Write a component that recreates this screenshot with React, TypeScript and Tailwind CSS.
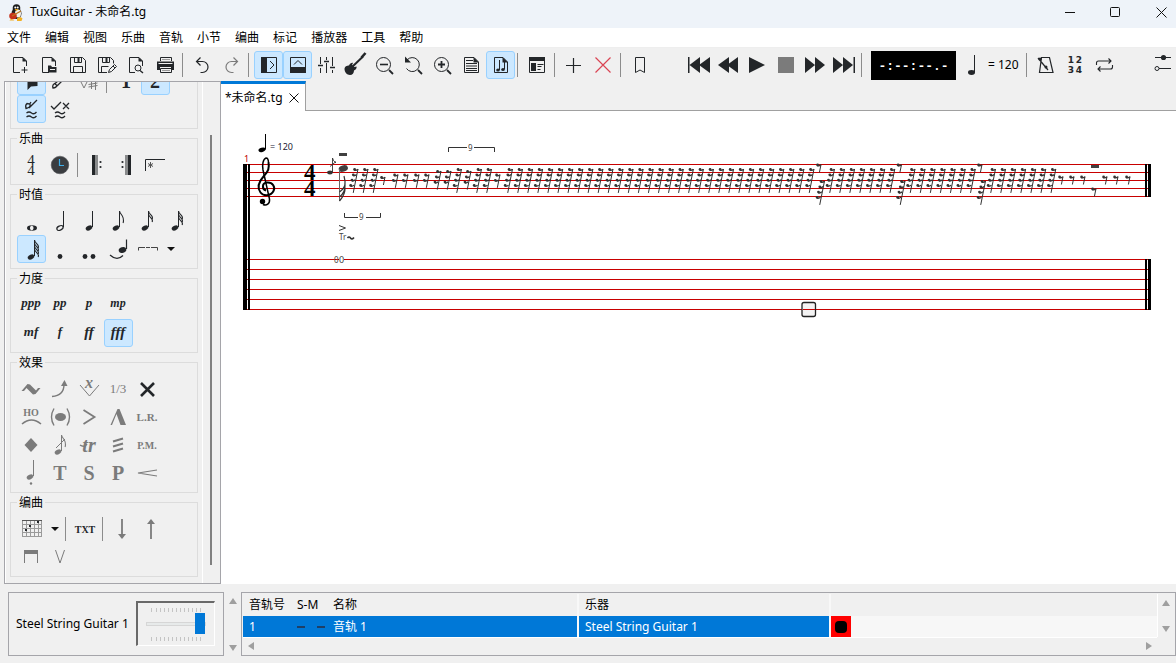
import { useState, type ReactNode } from "react";

type ToolProps = {
  label: string;
  active?: boolean;
  muted?: boolean;
  children: ReactNode;
};

const menus = ["文件", "编辑", "视图", "乐曲", "音轨", "小节", "编曲", "标记", "播放器", "工具", "帮助"];

// Every icon is drawn on the same 29x28 grid as its button
function Tool({ label, active, muted, children }: ToolProps) {
  return (
    <button
      type="button"
      aria-label={label}
      aria-pressed={active}
      className={`relative h-7 w-[29px] shrink-0 ${muted ? "text-[#7b7b7b]" : "text-[#232629]"}`}
    >
      {active && <span className="absolute inset-0 rounded-[3px] border border-[#99d1ff] bg-[#cce8ff]" />}
      <svg viewBox="0 0 29 28" className="relative block h-7 w-[29px]" fill="none" stroke="currentColor">
        {children}
      </svg>
    </button>
  );
}

function Sep() {
  return <div className="mr-[5px] ml-0.5 h-6 w-px shrink-0 self-center bg-[#8c8c8c]" />;
}

function DropArrow({ label }: { label: string }) {
  return (
    <button type="button" aria-label={label} className="flex h-7 w-[17px] shrink-0 items-center justify-center">
      <svg viewBox="0 0 8 4" className="h-1 w-2" fill="#111">
        <path d="M0 0h8L4 4z" />
      </svg>
    </button>
  );
}

type GlyphProps = {
  children: string;
  size?: number;
  x?: number;
  y?: number;
  italic?: boolean;
  weight?: string;
};

function Glyph({ children, size = 13, x = 14, y = 18, italic = false, weight = "bold" }: GlyphProps) {
  return (
    <text
      x={x}
      y={y}
      textAnchor="middle"
      fontSize={size}
      fontStyle={italic ? "italic" : "normal"}
      fontWeight={weight}
      fontFamily='"Liberation Serif", serif'
      fill="currentColor"
      stroke="none"
    >
      {children}
    </text>
  );
}

// Note with a stem; flags are counted from the top of the stem
function Note({ x = 14, y = 21, flags = 0, hollow = false }: { x?: number; y?: number; flags?: number; hollow?: boolean }) {
  return (
    <g>
      <ellipse
        cx={x}
        cy={y}
        rx="3.3"
        ry="2.1"
        transform={`rotate(-25 ${x} ${y})`}
        fill={hollow ? "none" : "currentColor"}
        strokeWidth={hollow ? 1.2 : 0.4}
      />
      <path d={`M${x + 3.5} ${y - 1}V${y - 17}`} strokeWidth="1" />
      {Array.from({ length: flags }, (_, i) => (
        <path key={i} d={`M${x + 3.5} ${y - 17 + i * 3}c.6 4 5.6 4.500 3.600 ${flags === 1 ? 12 : 8}`} strokeWidth="1.1" />
      ))}
    </g>
  );
}

function Page() {
  return (
    <>
      <path d="M14 21.500H7.500V6.500H17L20.500 10V15" />
      <path d="M16.500 6l4.500 4.500h-4.500z" fill="currentColor" stroke="none" />
    </>
  );
}

function Group({ title, children }: { title?: string; children: ReactNode }) {
  return (
    <fieldset className="shrink-0 border border-[#dcdcdc] px-1.5 py-[5px]">
      {title && <legend className="h-4 px-0.5 leading-[18px]">{title}</legend>}
      {children}
    </fieldset>
  );
}

function Row({ children }: { children: ReactNode }) {
  return <div className="flex h-7">{children}</div>;
}

function TitleBar() {
  return (
    <header className="flex h-7 shrink-0 items-center bg-[#eef3f9] pb-1 pl-2">
      <svg viewBox="0 0 16 17" className="h-[17px] w-4">
        <ellipse cx="8.500" cy="9.500" rx="5" ry="5.500" fill="#26221f" />
        <circle cx="8.500" cy="4" r="3.800" fill="#1c1c1c" />
        <ellipse cx="10" cy="9.500" rx="3" ry="4" fill="#f4f1ea" />
        <circle cx="7.300" cy="3.600" r="1" fill="#fff" />
        <circle cx="9.700" cy="3.600" r="1" fill="#fff" />
        <path d="M6.500 5h4l-2 2z" fill="#f0a818" />
        <ellipse cx="5" cy="12" rx="3.800" ry="3.200" fill="#c8321c" />
        <path d="M4 12l9-5" stroke="#b8741c" strokeWidth="1.300" />
        <path d="M9 14.500q3-3 5.500 0l-1 2.500H9z" fill="#f2b022" />
        <path d="M1.500 16.500q1-3 5 0z" fill="#f2b022" />
      </svg>
      <h1 className="ml-1.5">TuxGuitar - 未命名.tg</h1>
      <div className="ml-auto flex gap-4">
        <button type="button" aria-label="最小化" className="flex h-6 w-[30px] items-center justify-center">
          <svg viewBox="0 0 11 11" className="size-[11px]" stroke="#111" fill="none"><path d="M1 5.500h10" /></svg>
        </button>
        <button type="button" aria-label="最大化" className="flex h-6 w-[30px] items-center justify-center">
          <svg viewBox="0 0 11 11" className="size-[11px]" stroke="#111" fill="none"><rect x=".5" y=".5" width="9" height="9" rx="1" /></svg>
        </button>
        <button type="button" aria-label="关闭" className="flex h-6 w-[30px] items-center justify-center">
          <svg viewBox="0 0 11 11" className="size-[11px]" stroke="#111" fill="none"><path d="M.5.500l10 10M10.500.500l-10 10" /></svg>
        </button>
      </div>
    </header>
  );
}

function Toolbar() {
  return (
    <div className="flex h-[33px] shrink-0 items-center pt-px pl-1.5">
      <Tool label="新建">
        <Page />
        <path d="M18.500 16v6M15.500 19h6" />
      </Tool>
      <Tool label="打开">
        <Page />
        <path d="M13 21.500v-7h3l1 1.500h4.500v5.500z" fill="currentColor" stroke="none" />
        <path d="M15 18.500h5" stroke="#f0f0f0" />
      </Tool>
      <Tool label="保存">
        <path d="M6.500 6.500h12l3 3v12h-15zM10.500 6.500v5h7v-5M9.500 21.500v-6h9v6" />
        <path d="M14.500 7v4" strokeWidth="2" />
      </Tool>
      <Tool label="另存为">
        <path d="M14 21.500H5.500v-15h12l3 3v3M9.500 6.500v5h7v-5M8.500 21.500v-6h7" />
        <path d="M13.500 7v4" strokeWidth="2" />
        <path d="M15.500 21.500l1-3 5-5 2 2-5 5zM20 15l2 2" />
      </Tool>
      <Tool label="打印预览">
        <path d="M13 21.500H7.500v-15H17l3.500 3.500v5" />
        <path d="M16.500 6l4.500 4.500h-4.500z" fill="currentColor" stroke="none" />
        <circle cx="16" cy="17" r="3" />
        <path d="M18 19.500l3 2.500" strokeWidth="1.400" />
      </Tool>
      <Tool label="打印">
        <path d="M9.500 10V6.500h11V10M9.500 17.500v4h11v-4z" />
        <path d="M6 19v-8.500h17V19h-3v-3H9v3z" fill="currentColor" stroke="none" />
        <path d="M7.500 12.500h14" stroke="#f0f0f0" />
        <path d="M11 8.500h8M11 19.500h8" stroke="#999" />
      </Tool>
      <Sep />
      <Tool label="撤销">
        <path d="M12.500 6.500l-4 4 4 4M9 10.500h5.500a5.500 5.500 0 010 11h-2" strokeWidth="1.200" />
      </Tool>
      <Tool label="重做" muted>
        <path d="M16.500 6.500l4 4-4 4M20 10.500h-5.500a5.500 5.500 0 000 11h2" strokeWidth="1.200" />
      </Tool>
      <Sep />
      <Tool label="编辑工具栏" active>
        <path d="M7.500 6.500h15v15h-15z" />
        <path d="M7 6h6v16H7z" fill="currentColor" stroke="none" />
        <path d="M16 10l4 4-4 4" />
      </Tool>
      <Tool label="音轨表" active>
        <path d="M7.500 6.500h15v15h-15z" />
        <path d="M7 16h16v6H7z" fill="currentColor" stroke="none" />
        <path d="M11 13.500l4-4 4 4" />
      </Tool>
      <Tool label="混音器">
        <path d="M8.500 6v7M8.500 17v5M14.500 6v3M14.500 12v10M20.500 6v9M20.500 19v3" />
        <path d="M6 14.500h5M12 10.500h5M18 16.500h5" strokeWidth="1.600" />
      </Tool>
      <Tool label="指板">
        <path d="M3.500 18c0-2.500 2.500-3.500 4.500-3.500 1-2 2.500-3 4-2.500l-1 2 2.500 2 2-.5c.5 1.500-.5 3-2.500 4 0 2.500-1.500 4.500-4 4.500-3 0-5.500-3-5.500-6z" fill="currentColor" stroke="none" />
        <path d="M10 17L22 5.500" strokeWidth="2" />
        <path d="M20.500 6.500l4-4.500" strokeWidth="2.600" />
      </Tool>
      <Tool label="缩小">
        <circle cx="13.500" cy="13.500" r="7" />
        <path d="M10 13.500h8" strokeWidth="1.600" />
        <path d="M19 19l4 4" strokeWidth="1.800" />
      </Tool>
      <Tool label="重置缩放">
        <path d="M8 9a7 7 0 11-.5 8.500" />
        <path d="M6 5.500v6h6z" fill="currentColor" stroke="none" />
        <path d="M19 19l4 4" strokeWidth="1.800" />
      </Tool>
      <Tool label="放大">
        <circle cx="13.500" cy="13.500" r="7" />
        <path d="M10 13.500h7M13.500 10v7" strokeWidth="1.800" />
        <path d="M19 19l4 4" strokeWidth="1.800" />
      </Tool>
      <Tool label="页面布局">
        <path d="M7.500 6.500H17L21.500 11v10.500h-14zM9 9.500h7M9 12.500h11M9 15h11M9 17.500h11M9 19.500h11" />
        <path d="M16.500 6l5.500 5.500h-5.500z" fill="currentColor" stroke="none" />
      </Tool>
      <Tool label="连续布局" active>
        <path d="M8.500 6.500H17l4.500 4.500v10.500h-13zM13.500 9v10M18.500 11v7" />
        <path d="M16.500 6l5.500 5.500h-5.500z" fill="currentColor" stroke="none" />
        <ellipse cx="12" cy="19" rx="1.800" ry="1.500" fill="currentColor" stroke="none" />
        <ellipse cx="17" cy="18.500" rx="1.800" ry="1.500" fill="currentColor" stroke="none" />
      </Tool>
      <Sep />
      <Tool label="音轨属性">
        <path d="M6.500 6.500h15v15h-15z" />
        <path d="M6 6h16v4H6zM8 12h5v8H8z" fill="currentColor" stroke="none" />
        <path d="M14.500 13.500h6M14.500 15.500h4M14.500 18.500h3" />
      </Tool>
      <Sep />
      <Tool label="添加音轨">
        <path d="M13.500 7v15M6 14.500h15" strokeWidth="1.200" />
      </Tool>
      <Tool label="删除音轨">
        <path d="M6.500 6.500l15 15M21.500 6.500l-15 15" stroke="#da4453" strokeWidth="1.200" />
      </Tool>
      <Sep />
      <Tool label="标记列表">
        <path d="M9.500 6.500h9v15l-4.500-2.500-4.500 2.500z" />
      </Tool>

      <div className="ml-[30px] flex items-center">
        <Tool label="首小节">
          <path d="M3 6h1.500v16H3zM15 6v16L4.500 14zM25 6v16L14 14z" fill="currentColor" stroke="none" />
        </Tool>
        <Tool label="上一小节">
          <path d="M15 6v16L4 14zM24 6v16L13 14z" fill="currentColor" stroke="none" />
        </Tool>
        <Tool label="播放">
          <path d="M6 6l16 8-16 8z" fill="currentColor" stroke="none" />
        </Tool>
        <Tool label="停止">
          <path d="M6 6h16v16H6z" fill="#7b7b7b" stroke="none" />
        </Tool>
        <Tool label="下一小节">
          <path d="M4 6l10 8-10 8zM14 6l10 8-10 8z" fill="currentColor" stroke="none" />
        </Tool>
        <Tool label="末小节">
          <path d="M3 6l10 8-10 8zM13 6l10 8-10 8zM23.500 6H25v16h-1.500z" fill="currentColor" stroke="none" />
        </Tool>
        <Sep />
        <output className="ml-1 flex h-[29px] w-[85px] items-center justify-center bg-black pt-1 font-['Liberation_Mono',monospace] text-[13px] font-bold text-white">
          -:--:--.-
        </output>
        <svg viewBox="0 0 8 20" className="ml-3 h-5 w-2">
          <ellipse cx="3.500" cy="17.500" rx="3.500" ry="2.400" fill="#232629" />
          <path d="M6.500 0v17" stroke="#232629" />
        </svg>
        <span className="ml-3 w-9">= 120</span>
        <Sep />
        <Tool label="节拍器">
          <path d="M9.500 6.500h8l3.500 15H7.500zM6 7l10 12" strokeWidth="1.200" />
          <circle cx="8" cy="8" r="1.600" fill="currentColor" stroke="none" />
          <circle cx="14" cy="16" r="1.500" fill="currentColor" stroke="none" />
        </Tool>
        <Tool label="倒计时">
          <g fontFamily='"DejaVu Sans", sans-serif' fontWeight="bold" fontSize="9" fill="currentColor" stroke="none" textAnchor="middle">
            <text x="10" y="12">1</text>
            <text x="18" y="12">2</text>
            <text x="10" y="22">3</text>
            <text x="18" y="22">4</text>
          </g>
        </Tool>
        <Tool label="播放模式">
          <path d="M6.500 14v-2q0-2 2-2H21M22.500 14v2q0 2-2 2H8M18.500 7.500L21 10l-2.500 2.500M10.500 15.500L8 18l2.500 2.500" strokeWidth="1.100" />
        </Tool>
      </div>
      <div className="ml-auto">
        <Tool label="设置">
          <path d="M8 8.500h16M12 19.500h12" strokeWidth="1.200" />
          <circle cx="16.500" cy="8.500" r="2.600" fill="currentColor" stroke="none" />
          <circle cx="10" cy="19.500" r="2" />
        </Tool>
      </div>
    </div>
  );
}

function Sidebar() {
  return (
    <aside className="flex w-[217px] shrink-0 border border-[#a5a5aa] bg-[#f0f0f0]">
      {/* the panel is scrolled to its end */}
      <div className="flex flex-1 flex-col justify-end gap-px overflow-hidden border-x border-white pr-1 pb-1.5 pl-1">
        <Group>
          <Row>
            <Tool label="选择" active>
              <path d="M10.500 6v17l3.500-3.500 6.500-.5V6z" fill="currentColor" stroke="none" />
            </Tool>
            <Tool label="编辑">
              <path d="M8.500 17l8-7M7 21q-1-3 1.500-4.500l2.500 2q-1 2.500-4 2.500zM11 19l7-7" strokeWidth="1.300" />
            </Tool>
            <Tool label="自动升降号" muted>
              <path d="M6 15l3 6 5-10M16.500 14v8M20.500 14v9M13.500 17.500l9-1.500M13.500 20l9-1.500" />
            </Tool>
            <Sep />
            <Tool label="声部一">
              <Glyph size={20} y={21}>1</Glyph>
            </Tool>
            <Tool label="声部二" active>
              <Glyph size={20} y={21}>2</Glyph>
            </Tool>
          </Row>
          <Row>
            <Tool label="自由编辑" active>
              <path d="M12 13l8-8M9 13.500q-1-3.500 1-5l3 .5q1 3.500-4 4.500zM13 8.500l1-1.500" strokeWidth="1.300" />
              <path d="M9.500 18q2.500-2 5 0t5-1M9.500 22q2.500-2 5 0t5-1" strokeWidth="1.300" />
            </Tool>
            <Tool label="校验">
              <path d="M5 11l3 3 7-7M17 8l6 6M23 8l-6 6" strokeWidth="1.300" />
              <path d="M9 18q2.500-2 5 0t5-1M9 22q2.500-2 5 0t5-1" strokeWidth="1.300" />
            </Tool>
          </Row>
        </Group>

        <Group title="乐曲">
          <Row>
            <Tool label="拍号">
              <Glyph size={15} y={14} weight="normal">4</Glyph>
              <Glyph size={15} y={24} weight="normal">4</Glyph>
            </Tool>
            <Tool label="速度">
              <circle cx="14" cy="14" r="8.800" fill="#3a3d40" stroke="#55585a" strokeWidth=".6" />
              <path d="M13.500 8v6.500H18" stroke="#3daee9" strokeWidth="1.200" />
            </Tool>
            <Sep />
            <Tool label="反复开始">
              <path d="M9 4h3.500v20H9zM13.500 4h1v20h-1z" fill="currentColor" stroke="none" />
              <circle cx="17.500" cy="11" r="1.100" fill="currentColor" stroke="none" />
              <circle cx="17.500" cy="16" r="1.100" fill="currentColor" stroke="none" />
            </Tool>
            <Tool label="反复结束">
              <path d="M15.500 4H19v20h-3.500zM13.500 4h1v20h-1z" fill="currentColor" stroke="none" />
              <circle cx="10.500" cy="11" r="1.100" fill="currentColor" stroke="none" />
              <circle cx="10.500" cy="16" r="1.100" fill="currentColor" stroke="none" />
            </Tool>
            <Tool label="反复跳跃">
              <path d="M4.500 20V8.500H24" />
              <path d="M9.500 11v6M7 12.500l5 3M12 12.500l-5 3" stroke="#555" />
            </Tool>
          </Row>
        </Group>

        <Group title="时值">
          <Row>
            <Tool label="全音符">
              <path fillRule="evenodd" d="M10 21a5 2.700 0 0110 0a5 2.700 0 01-10 0zM13 20.500a1.600 2 0 003.500 1a1.600 2 0 00-3.500-1z" fill="currentColor" stroke="none" />
            </Tool>
            <Tool label="二分音符"><Note hollow /></Tool>
            <Tool label="四分音符"><Note /></Tool>
            <Tool label="八分音符"><Note x={12} flags={1} /></Tool>
            <Tool label="十六分音符"><Note x={12} flags={2} /></Tool>
            <Tool label="三十二分音符"><Note x={13} flags={3} /></Tool>
          </Row>
          <Row>
            <Tool label="六十四分音符" active><Note x={14} y={22} flags={4} /></Tool>
            <Tool label="附点">
              <circle cx="14" cy="21.500" r="2.400" fill="currentColor" stroke="none" />
            </Tool>
            <Tool label="双附点">
              <circle cx="10" cy="21.500" r="2.400" fill="currentColor" stroke="none" />
              <circle cx="18" cy="21.500" r="2.400" fill="currentColor" stroke="none" />
            </Tool>
            <Tool label="连音线">
              <ellipse cx="18.500" cy="15" rx="3.900" ry="2.800" transform="rotate(-20 18.500 15)" fill="currentColor" stroke="none" />
              <path d="M22.500 4.500V14M6 20q7 6.500 13 .5" strokeWidth="1.200" />
            </Tool>
            <Tool label="连音">
              <path d="M5.500 15.500v-3H12M13 12.500h4M18 12.500h6.500v3" stroke="#444" />
            </Tool>
            <DropArrow label="连音类型" />
          </Row>
        </Group>

        <Group title="力度">
          <Row>
            <Tool label="ppp"><Glyph italic y={16}>ppp</Glyph></Tool>
            <Tool label="pp"><Glyph italic y={16}>pp</Glyph></Tool>
            <Tool label="p"><Glyph italic y={16}>p</Glyph></Tool>
            <Tool label="mp"><Glyph italic y={16} size={12}>mp</Glyph></Tool>
          </Row>
          <Row>
            <Tool label="mf"><Glyph italic y={17}>mf</Glyph></Tool>
            <Tool label="f"><Glyph italic y={17}>f</Glyph></Tool>
            <Tool label="ff"><Glyph italic size={15}>ff</Glyph></Tool>
            <Tool label="fff" active><Glyph italic size={15}>fff</Glyph></Tool>
          </Row>
        </Group>

        <Group title="效果">
          <Row>
            <Tool label="颤音" muted>
              <path d="M4.500 16l6-7 2.500.5 6 6 2-2.500h2.500l-5 6-2.500.5-6.500-6.500-2.500 3z" fill="currentColor" stroke="none" />
            </Tool>
            <Tool label="推弦" muted>
              <path d="M6 21.500q12-1 12-12" strokeWidth="1.400" />
              <path d="M15 11l3.500-6 3 6z" fill="currentColor" stroke="none" />
            </Tool>
            <Tool label="摇把" muted>
              <path d="M5 10l9.500 11L24 10" />
              <Glyph italic size={16} y={13}>x</Glyph>
            </Tool>
            <Tool label="三分之一" muted><Glyph size={13} weight="normal">1/3</Glyph></Tool>
            <Tool label="闷音">
              <path d="M8 8l13 13M21 8L8 21" strokeWidth="2.600" />
            </Tool>
          </Row>
          <Row>
            <Tool label="击弦" muted>
              <Glyph size={10} y={13}>HO</Glyph>
              <path d="M5 21q9.500-8 19 0" strokeWidth="1.600" />
            </Tool>
            <Tool label="幽灵音" muted>
              <ellipse cx="14.500" cy="14" rx="5.500" ry="4" fill="currentColor" stroke="none" />
              <path d="M8 5.500q-5 8.500 0 17M21 5.500q5 8.500 0 17" strokeWidth="1.400" />
            </Tool>
            <Tool label="重音" muted>
              <path d="M8.500 7l11 7-11 7" strokeWidth="1.800" />
            </Tool>
            <Tool label="强重音" muted>
              <path d="M6.500 22l7-16h2l6.500 16h-5.500L12.500 11 8 22z" fill="currentColor" stroke="none" />
            </Tool>
            <Tool label="延音" muted><Glyph size={11}>L.R.</Glyph></Tool>
          </Row>
          <Row>
            <Tool label="泛音" muted>
              <path d="M14 7l6.500 7-6.500 7-6.500-7z" fill="currentColor" stroke="none" />
            </Tool>
            <Tool label="装饰音" muted>
              <Note x={12} flags={1} />
              <path d="M10 17l9-9" />
            </Tool>
            <Tool label="颤音记号" muted>
              <Glyph italic size={20} y={21}>tr</Glyph>
              <path d="M5 14q4 3 7-1" strokeWidth="1.400" />
            </Tool>
            <Tool label="震音拨弦" muted>
              <path d="M9 10.500l10-3M9 15.500l10-3M9 20.500l10-3" strokeWidth="2.200" />
            </Tool>
            <Tool label="手掌闷音" muted><Glyph size={10}>P.M.</Glyph></Tool>
          </Row>
          <Row>
            <Tool label="断奏" muted>
              <Note y={18} x={13} />
              <circle cx="14" cy="24.500" r="1.200" fill="currentColor" stroke="none" />
            </Tool>
            <Tool label="点弦" muted><Glyph size={20} y={21}>T</Glyph></Tool>
            <Tool label="击勾弦" muted><Glyph size={20} y={21}>S</Glyph></Tool>
            <Tool label="拨弦" muted><Glyph size={20} y={21}>P</Glyph></Tool>
            <Tool label="淡入" muted>
              <path d="M24 11L5 14l19 3" strokeWidth="1.200" />
            </Tool>
          </Row>
        </Group>

        <Group title="编曲">
          <Row>
            <Tool label="和弦">
              <path d="M5.500 5v17M9.500 5v17M13.500 5v17M17.500 5v17M21.500 5v17M24.500 5v17M5 9.500h20M5 13.500h20M5 17.500h20M5 21.500h20" stroke="#9a9a9a" />
              <path d="M5 5.500h20" stroke="#555" />
              <path d="M8 14h2v2H8zM12 10h2v2h-2zM20 6h2v2h-2z" fill="currentColor" stroke="none" />
            </Tool>
            <DropArrow label="和弦列表" />
            <Sep />
            <Tool label="文本"><Glyph size={10}>TXT</Glyph></Tool>
            <Sep />
            <Tool label="下扫弦" muted>
              <path d="M14 4v17" strokeWidth="1.800" />
              <path d="M10 19h8l-4 5z" fill="currentColor" stroke="none" />
            </Tool>
            <Tool label="上扫弦" muted>
              <path d="M14 7v17" strokeWidth="1.800" />
              <path d="M10 9h8l-4-5z" fill="currentColor" stroke="none" />
            </Tool>
          </Row>
          <Row>
            <Tool label="下拨" muted>
              <path d="M7.500 20V8M20.500 20V8" />
              <path d="M7 7h14v4H7z" fill="currentColor" stroke="none" />
            </Tool>
            <Tool label="上拨" muted>
              <path d="M9.500 7l4.500 13 4.500-13" />
            </Tool>
          </Row>
        </Group>
      </div>
      <div className="flex w-[17px] justify-center pr-0.5">
        <div className="mt-[53px] mb-[18px] w-0.5 bg-[#808080]" />
      </div>
    </aside>
  );
}

// Rest with one hook per level, hanging from its upper right tip
function Rest({ x, y, hooks }: { x: number; y: number; hooks: number }) {
  const drop = (hooks - 1) * 5.3 + 8;
  return (
    <g>
      <path d={`M${x} ${y}L${x - drop * 0.2} ${y + drop}`} strokeWidth="1" />
      {Array.from({ length: hooks }, (_, i) => (
        <g key={i}>
          <circle cx={x - 3.4 - i * 1.3} cy={y + 0.5 + i * 5.3} r="1.400" fill="#333" stroke="none" />
          <path d={`M${x - 3.4 - i * 1.3} ${y + 1.4 + i * 5.3}q2 .3 3.300-1.200`} strokeWidth="1.300" />
        </g>
      ))}
    </g>
  );
}

const range = (start: number, count: number) => Array.from({ length: count }, (_, i) => start + i * 10.05);

const rests: [number, number, number][] = [
  [358, 169, 4], [368, 169, 4], [378, 169, 4], [385, 177, 1],
  [398, 174.5, 2], [408, 174.5, 2], [419, 174.5, 2], [429, 174.5, 2],
  [441, 171, 3], [451, 171, 3], [461.5, 169, 4], [471, 171, 3], [481.5, 169, 4], [491.5, 169, 4], [500, 174.5, 2],
  ...range(512.5, 31).map((x): [number, number, number] => [x, 169, 4]),
  ...[834.5, 915, 995.5].flatMap((s) => range(s, 7).map((x): [number, number, number] => [x, 169, 4])),
  ...[821, 901.5, 982].map((x): [number, number, number] => [x, 164.5, 1]),
  ...[824.5, 905, 985.5].map((x): [number, number, number] => [x, 181, 4]),
  [1063, 176.5, 1], [1074, 176.5, 1], [1085, 176.5, 1], [1096, 188.5, 1],
  [1107, 176.5, 1], [1118, 176.5, 1], [1130, 176.5, 1],
];

function Score() {
  return (
    <svg viewBox="221 111 955 220" width="955" height="220" fill="none" stroke="#333" fontFamily='"Noto Sans", sans-serif'>
      <path d="M247 164.500h901M247 172.500h901M247 180.500h901M247 188.500h901M247 196.500h901" stroke="#c80000" />
      <path d="M247 259.500h901M247 269.500h901M247 279.500h901M247 289.500h901M247 299.500h901M247 309.500h901" stroke="#c80000" />
      <path d="M243 164h4v146h-4zM248 164h2v146h-2zM1145 164h2v33h-2zM1148 164h3v33h-3zM1145 259h2v51h-2zM1148 259h3v51h-3z" fill="#000" stroke="none" />

      {/* tempo */}
      <ellipse cx="262" cy="149.800" rx="3.600" ry="2.200" transform="rotate(-15 262 149.800)" fill="#000" stroke="none" />
      <path d="M265.500 134v15.500" stroke="#000" />
      <text x="270" y="150" fontSize="9" fill="#223" stroke="none">= 120</text>
      <text x="244" y="162" fontSize="9" fill="#c00000" stroke="none">1</text>

      {/* clef */}
      <g stroke="#000">
        <path d="M266 190.500c-4-1-4.500-7.500 1-8 6-.5 8.500 5 6.500 8.500-2.500 5-10 5.500-13 1.500-4-5.500-1.500-11 3-16 5-5 6-8.500 5-14" strokeWidth="2" />
        <path d="M268.500 163c0-3-1-5-2.500-5-3 1-4 7-3 12l6.500 29c.5 5-3 7-6.500 5.500" strokeWidth="1.500" />
        <circle cx="262.500" cy="201.500" r="2.700" fill="#000" stroke="none" />
      </g>
      <g fontFamily='"Liberation Serif", serif' fontWeight="bold" fontSize="23" fill="#000" stroke="none">
        <text x="304" y="180">4</text>
        <text x="304" y="196">4</text>
      </g>

      {/* first beat with its grace note */}
      <ellipse cx="330" cy="172.500" rx="2.800" ry="1.900" fill="#333" stroke="none" />
      <path d="M332.500 158v14.500M332.500 158q.5 3 3.500 5M330 166.500l6-5" strokeWidth=".9" />
      <ellipse cx="343.300" cy="168.500" rx="4.700" ry="3.200" transform="rotate(-15 343.300 168.500)" fill="#404040" stroke="none" />
      <path d="M339.500 169v32" stroke="#666" />
      <path d="M339.500 201q6-7 5.500-13M339.500 197q6-5 5.500-12M339.500 192q6-4 5.500-10M345 186q.5-5-1-10" strokeWidth="1.200" />
      <path d="M339 153h8v3h-8z" fill="#404040" stroke="none" />
      <path d="M1091 165h8v3h-8z" fill="#404040" stroke="none" />

      {rests.map(([x, y, hooks], i) => (
        <Rest key={i} x={x} y={y} hooks={hooks} />
      ))}

      <path d="M448.500 152v-4.500H467M474 147.500h20.500v4.500M344.500 213v4.500H358M366 217.500h14.500V213" />
      <path d="M339 225.500l6.500 2.500-6.500 2.500" />
      <path d="M347.500 238q1.500-2 3 0t3.500-.5" strokeWidth="1.600" />
      <g fontSize="8" fill="#444" stroke="none">
        <text x="468" y="151">9</text>
        <text x="359" y="220">9</text>
        <text x="339" y="240">Tr</text>
      </g>
      <path d="M339 257h5v5h-5z" fill="#fff" stroke="none" />
      <g fill="#444" stroke="none" fontSize="9">
        <text x="334" y="263" fontSize="8">0</text>
        <text x="339" y="263">0</text>
      </g>

      <rect x="802" y="302.500" width="13.500" height="14" rx="2" fill="#f3f3f3" stroke="#222" strokeWidth="1.300" />
      <path d="M803 309.500h12" stroke="#c80000" />
    </svg>
  );
}

function ScrollArrow({ dir }: { dir: "up" | "down" | "left" | "right" }) {
  const shapes = { up: "M0 7h8L4 1z", down: "M0 1h8L4 7z", left: "M7 0v8L1 4z", right: "M1 0v8l6-4z" };
  return (
    <svg viewBox="0 0 8 8" className="size-2" fill="#9f9f9f">
      <path d={shapes[dir]} />
    </svg>
  );
}

function Ticks() {
  return (
    <svg viewBox="0 0 50 4" className="h-1 w-[50px]" stroke="#c4c4c4">
      <path d="M.5 0v4M5.500 0v4M9.500 0v4M13.500 0v4M17.500 0v4M21.500 0v4M25.500 0v4M29.500 0v4M33.500 0v4M37.500 0v4M41.500 0v4M45.500 0v4M49.500 0v4" />
    </svg>
  );
}

export default function App() {
  const [volume, setVolume] = useState(100);

  return (
    <div className="flex h-screen flex-col overflow-hidden bg-[#f0f0f0] font-['Noto_Sans','Noto_Sans_CJK_SC',sans-serif] text-xs text-black">
      <TitleBar />
      <nav className="flex h-5 shrink-0 items-center border-b border-[#eee] bg-white">
        {menus.map((m) => (
          <button key={m} type="button" className="px-[7px] leading-4">
            {m}
          </button>
        ))}
      </nav>
      <Toolbar />

      <main className="flex min-h-0 flex-1 pl-1">
        <Sidebar />
        <section className="flex min-w-0 flex-1 flex-col">
          <div className="flex h-[30px] shrink-0">
            <div className="flex items-center gap-1.5 border-t-[3px] border-r border-t-[#0078d7] border-r-[#a0a0a0] bg-white pr-1.5 pl-1">
              <span>*未命名.tg</span>
              <button type="button" aria-label="关闭标签">
                <svg viewBox="0 0 10 10" className="size-2.5" stroke="#111"><path d="M.5.500l9 9M9.500.500l-9 9" /></svg>
              </button>
            </div>
            <div className="flex-1 border-b border-[#a0a0a0]" />
          </div>
          <div className="flex-1 overflow-hidden bg-white">
            <Score />
          </div>
        </section>
      </main>

      <footer className="flex h-[79px] shrink-0 pt-2 pb-[7px] pl-2">
        <div className="flex w-[216px] shrink-0 items-center justify-between border border-[#a5a5aa] pr-2 pb-px pl-[7px]">
          <label htmlFor="volume">Steel String Guitar 1</label>
          <div className="flex h-[45px] w-[79px] flex-col items-center justify-center gap-0.5 border-t-2 border-r border-b border-l-2 border-t-[#696969] border-r-white border-b-white border-l-[#696969]">
            <Ticks />
            <input
              id="volume"
              type="range"
              value={volume}
              onChange={(e) => setVolume(Number(e.target.value))}
              className="h-[21px] w-[60px] appearance-none bg-transparent [&::-webkit-slider-runnable-track]:h-1 [&::-webkit-slider-runnable-track]:border [&::-webkit-slider-runnable-track]:border-[#d6d6d6] [&::-webkit-slider-runnable-track]:bg-[#e7eaea] [&::-webkit-slider-thumb]:-mt-2.5 [&::-webkit-slider-thumb]:h-[21px] [&::-webkit-slider-thumb]:w-2.5 [&::-webkit-slider-thumb]:appearance-none [&::-webkit-slider-thumb]:bg-[#0078d7]"
            />
            <Ticks />
          </div>
        </div>
        <div className="flex w-[17px] shrink-0 flex-col items-center justify-between pt-[5px] pb-1">
          <ScrollArrow dir="up" />
          <ScrollArrow dir="down" />
        </div>

        <div className="flex min-w-0 flex-1 flex-col border border-[#a5a5aa] p-px">
          <div className="flex">
            <table className="min-w-0 flex-1 table-fixed border-separate border-spacing-0 text-left">
              <thead>
                <tr className="h-[22px]">
                  <th className="w-12 p-0 pl-1.5 font-normal whitespace-nowrap">音轨号</th>
                  <th className="w-9 p-0 pl-1.5 font-normal">S-M</th>
                  <th className="w-[252px] border-r-2 border-[#f8f8f8] p-0 pl-1.5 font-normal">名称</th>
                  <th className="w-[252px] border-r-2 border-[#f8f8f8] p-0 pl-1.5 font-normal">乐器</th>
                  <th className="p-0" />
                </tr>
              </thead>
              <tbody>
                <tr className="h-[21px] text-white">
                  <td className="bg-[#0078d7] p-0 pl-1.5">1</td>
                  <td className="bg-[#0078d7] p-0 pl-1.5">
                    <div className="flex gap-3">
                      <span className="h-0.5 w-2 bg-[#1f3f66]" />
                      <span className="h-0.5 w-2 bg-[#1f3f66]" />
                    </div>
                  </td>
                  <td className="border-r-2 border-[#f8f8f8] bg-[#0078d7] p-0 pl-1.5">音轨 1</td>
                  <td className="border-r-2 border-[#f8f8f8] bg-[#0078d7] p-0 pl-1.5">Steel String Guitar 1</td>
                  <td className="bg-[#f7f7f7] p-0">
                    <div className="flex h-[21px] w-5 items-center justify-center bg-[#ff0000]">
                      <span className="size-3 rounded-sm bg-black" />
                    </div>
                  </td>
                </tr>
              </tbody>
            </table>
            <div className="flex w-[17px] flex-col items-center justify-between border-l border-white pt-[5px] pb-1">
              <ScrollArrow dir="up" />
              <ScrollArrow dir="down" />
            </div>
          </div>
          <div className="mr-[17px] flex flex-1 items-center justify-between border-t border-white px-1">
            <ScrollArrow dir="left" />
            <ScrollArrow dir="right" />
          </div>
        </div>
      </footer>
    </div>
  );
}
